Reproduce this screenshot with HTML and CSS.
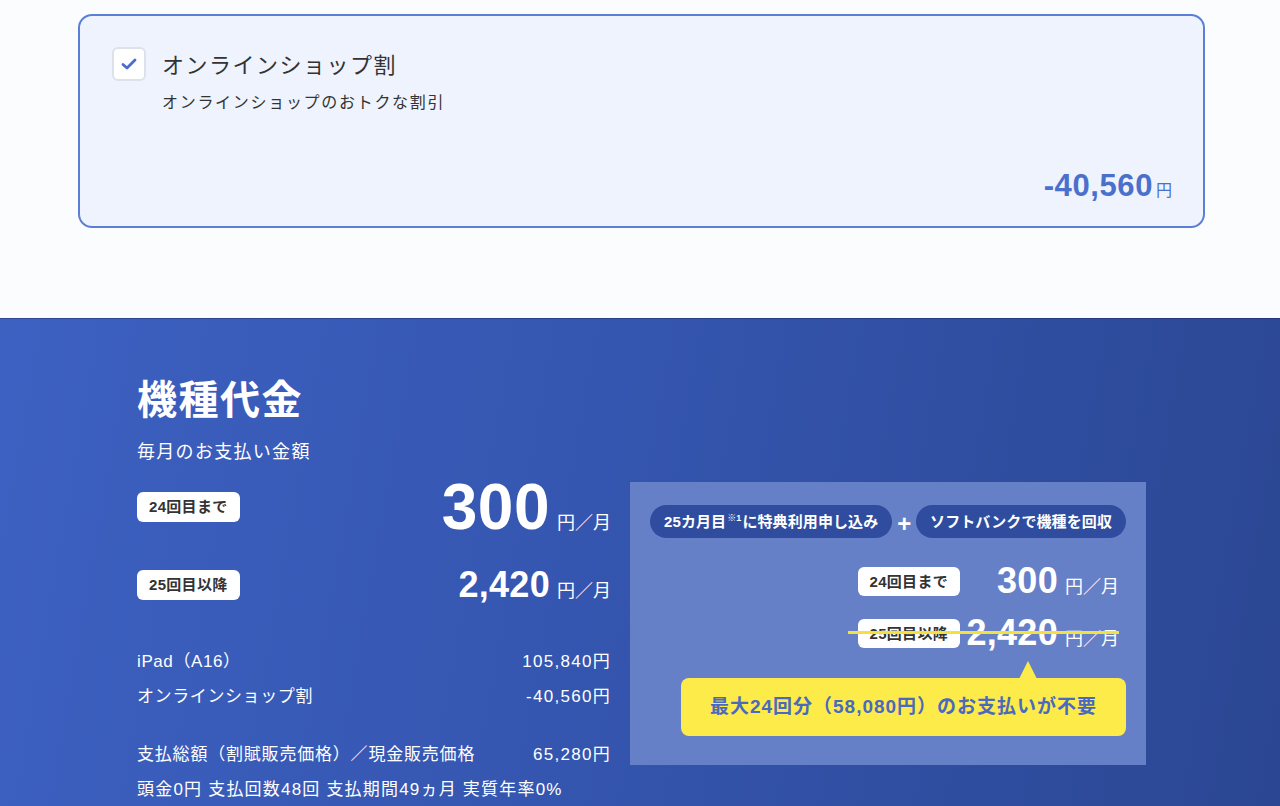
FILE: index.html
```html
<!DOCTYPE html>
<html lang="ja">
<head>
<meta charset="utf-8">
<title>機種代金</title>
<link rel="stylesheet" href="styles.css">
</head>
<body>
<section class="top">
  <div class="card">
    <div class="card-head">
      <span class="check">
        <svg width="18" height="14" viewBox="0 0 18 14"><path d="M3 7.5 L7 11 L15 3" fill="none" stroke="#4a6cd0" stroke-width="2.8" stroke-linecap="round" stroke-linejoin="round"/></svg>
      </span>
      <div class="card-text">
        <div class="card-title">オンラインショップ割</div>
        <div class="card-sub">オンラインショップのおトクな割引</div>
      </div>
    </div>
    <div class="card-price"><span class="num">-40,560</span><span class="yen">円</span></div>
  </div>
</section>
<section class="fee">
  <div class="fee-inner">
    <div class="fee-left">
      <h2 class="fee-title">機種代金</h2>
      <p class="fee-sub">毎月のお支払い金額</p>
      <div class="prow prow-1">
        <span class="badge">24回目まで</span>
        <span class="pgroup"><span class="pnum big">300</span><span class="punit">円／月</span></span>
      </div>
      <div class="prow prow-2">
        <span class="badge">25回目以降</span>
        <span class="pgroup"><span class="pnum mid">2,420</span><span class="punit">円／月</span></span>
      </div>
      <ul class="details">
        <li><span>iPad（A16）</span><span class="dv">105,840円</span></li>
        <li><span>オンラインショップ割</span><span class="dv">-40,560円</span></li>
        <li class="gap"><span>支払総額（割賦販売価格）／現金販売価格</span><span class="dv">65,280円</span></li>
        <li class="terms"><span>頭金0円 支払回数48回 支払期間49ヵ月 実質年率0%</span></li>
      </ul>
    </div>
    <div class="panel">
      <div class="pills">
        <span class="pill">25カ月目<sup>※1</sup>に特典利用申し込み</span>
        <span class="plus">+</span>
        <span class="pill">ソフトバンクで機種を回収</span>
      </div>
      <div class="rrow rrow-1">
        <span class="badge">24回目まで</span>
        <span class="rgroup"><span class="pnum mid">300</span><span class="punit">円／月</span></span>
      </div>
      <div class="rrow rrow-2 struck">
        <span class="badge">25回目以降</span>
        <span class="rgroup"><span class="pnum mid">2,420</span><span class="punit">円／月</span></span>
      </div>
      <div class="tip">最大24回分（58,080円）のお支払いが不要</div>
    </div>
  </div>
</section>
</body>
</html>
```
FILE: styles.css
```css
* { box-sizing: border-box; }
html, body { margin: 0; padding: 0; }
body {
  font-family: "Liberation Sans", "Noto Sans CJK JP", sans-serif;
  background: #fbfcfe;
  color: #333;
  overflow: hidden;
}
.top {
  height: 318px;
  padding: 14px 0 0 78px;
}
.card {
  width: 1127px;
  height: 214px;
  border: 2px solid #5b7fd5;
  border-radius: 14px;
  background: #eef3fd;
  padding: 31px 31px 22px 32px;
  display: flex;
  flex-direction: column;
}
.card-head { display: flex; gap: 16px; }
.check {
  width: 34px; height: 34px;
  border: 2px solid #dde2ea;
  border-radius: 6px;
  background: #fff;
  display: flex; align-items: center; justify-content: center;
  flex: none;
}
.card-title {
  font-size: 22px;
  letter-spacing: 1.5px;
  line-height: 34px;
  margin-top: 2px;
  color: #333;
}
.card-sub {
  font-size: 16px;
  letter-spacing: 1.7px;
  line-height: 24px;
  margin-top: 8px;
  color: #333;
}
.card-price {
  margin-top: auto;
  align-self: flex-end;
  color: #4a70cc;
  display: flex;
  align-items: baseline;
}
.card-price .num { font-size: 31px; font-weight: bold; letter-spacing: 0.6px; }
.card-price .yen { font-size: 16px; margin-left: 3px; }

.fee {
  height: 488px;
  background: linear-gradient(100deg, #3d61c2 0%, #3556b0 45%, #2b4793 100%);
  box-shadow: inset 0 1px 0 rgba(20, 30, 70, 0.35);
  color: #fff;
  padding: 58px 0 0 137px;
}
.fee-inner { display: flex; gap: 19px; align-items: flex-start; }
.fee-left { width: 474px; }
.fee-title {
  margin: 0;
  font-size: 40px;
  line-height: 48px;
  font-weight: bold;
  letter-spacing: 1.5px;
}
.fee-sub {
  margin: 15px 0 0;
  font-size: 18px;
  line-height: 26px;
  letter-spacing: 1.3px;
}
.prow {
  display: flex;
  justify-content: space-between;
  align-items: center;
}
.prow-1 { margin-top: 10px; height: 64px; }
.prow-2 { margin-top: 28px; height: 36px; }
.badge {
  background: #fff;
  color: #333;
  font-size: 15px;
  font-weight: bold;
  line-height: 30px;
  height: 30px;
  padding: 0 12px;
  border-radius: 6px;
  letter-spacing: 0.3px;
  white-space: nowrap;
}
.pgroup { display: flex; align-items: baseline; }
.pnum { font-weight: bold; line-height: 1; }
.pnum.big { font-size: 64px; letter-spacing: 0.5px; }
.pnum.mid { font-size: 36px; letter-spacing: 0.3px; }
.punit { font-size: 18px; margin-left: 7px; letter-spacing: 0; }

.details { list-style: none; margin: 46px 0 0; padding: 0; }
.details li {
  display: flex;
  justify-content: space-between;
  font-size: 17px;
  letter-spacing: 0.6px;
  line-height: 26px;
  margin-bottom: 9px;
}
.details li.gap { margin-top: 32px; letter-spacing: 0.8px; }
.details li.terms { letter-spacing: 1.2px; }
.details .dv { letter-spacing: 1.3px; font-size: 17px; }

.panel {
  margin-top: 106px;
  width: 516px;
  background: #6680c8;
  padding: 23px 20px 29px 20px;
}
.pills {
  display: flex;
  justify-content: space-between;
  align-items: center;
}
.pill {
  background: #2f4c9e;
  color: #fff;
  font-size: 15px;
  font-weight: bold;
  height: 33px;
  line-height: 33px;
  border-radius: 17px;
  padding: 0 14px;
  letter-spacing: 0.1px;
  white-space: nowrap;
}
.pill sup { font-size: 9px; vertical-align: 0; position: relative; top: -6px; margin: 0 1px; }
.plus { font-size: 24px; font-weight: bold; color: #fff; line-height: 1; position: relative; top: 2px; }
.rrow {
  display: flex;
  justify-content: flex-end;
  align-items: center;
  height: 36px;
  padding-right: 7px;
  position: relative;
}
.rrow-1 { margin-top: 25px; }
.rrow-2 { margin-top: 16px; }
.rrow .badge { height: 29px; line-height: 29px; }
.rgroup {
  width: 159px;
  display: flex;
  justify-content: flex-end;
  align-items: baseline;
}
.struck::after {
  content: "";
  position: absolute;
  left: 198px;
  right: 7px;
  top: 16px;
  height: 3px;
  background: #f4e23c;
}
.tip {
  position: relative;
  margin: 27px 0 0 31px;
  width: 445px;
  height: 58px;
  background: #fdeb4a;
  border-radius: 8px;
  color: #4a69bf;
  font-size: 19px;
  font-weight: bold;
  line-height: 58px;
  text-align: center;
  letter-spacing: 1px;
}
.tip::before {
  content: "";
  position: absolute;
  top: -17px;
  left: 338px;
  border-left: 9px solid transparent;
  border-right: 9px solid transparent;
  border-bottom: 18px solid #fdeb4a;
}
```
